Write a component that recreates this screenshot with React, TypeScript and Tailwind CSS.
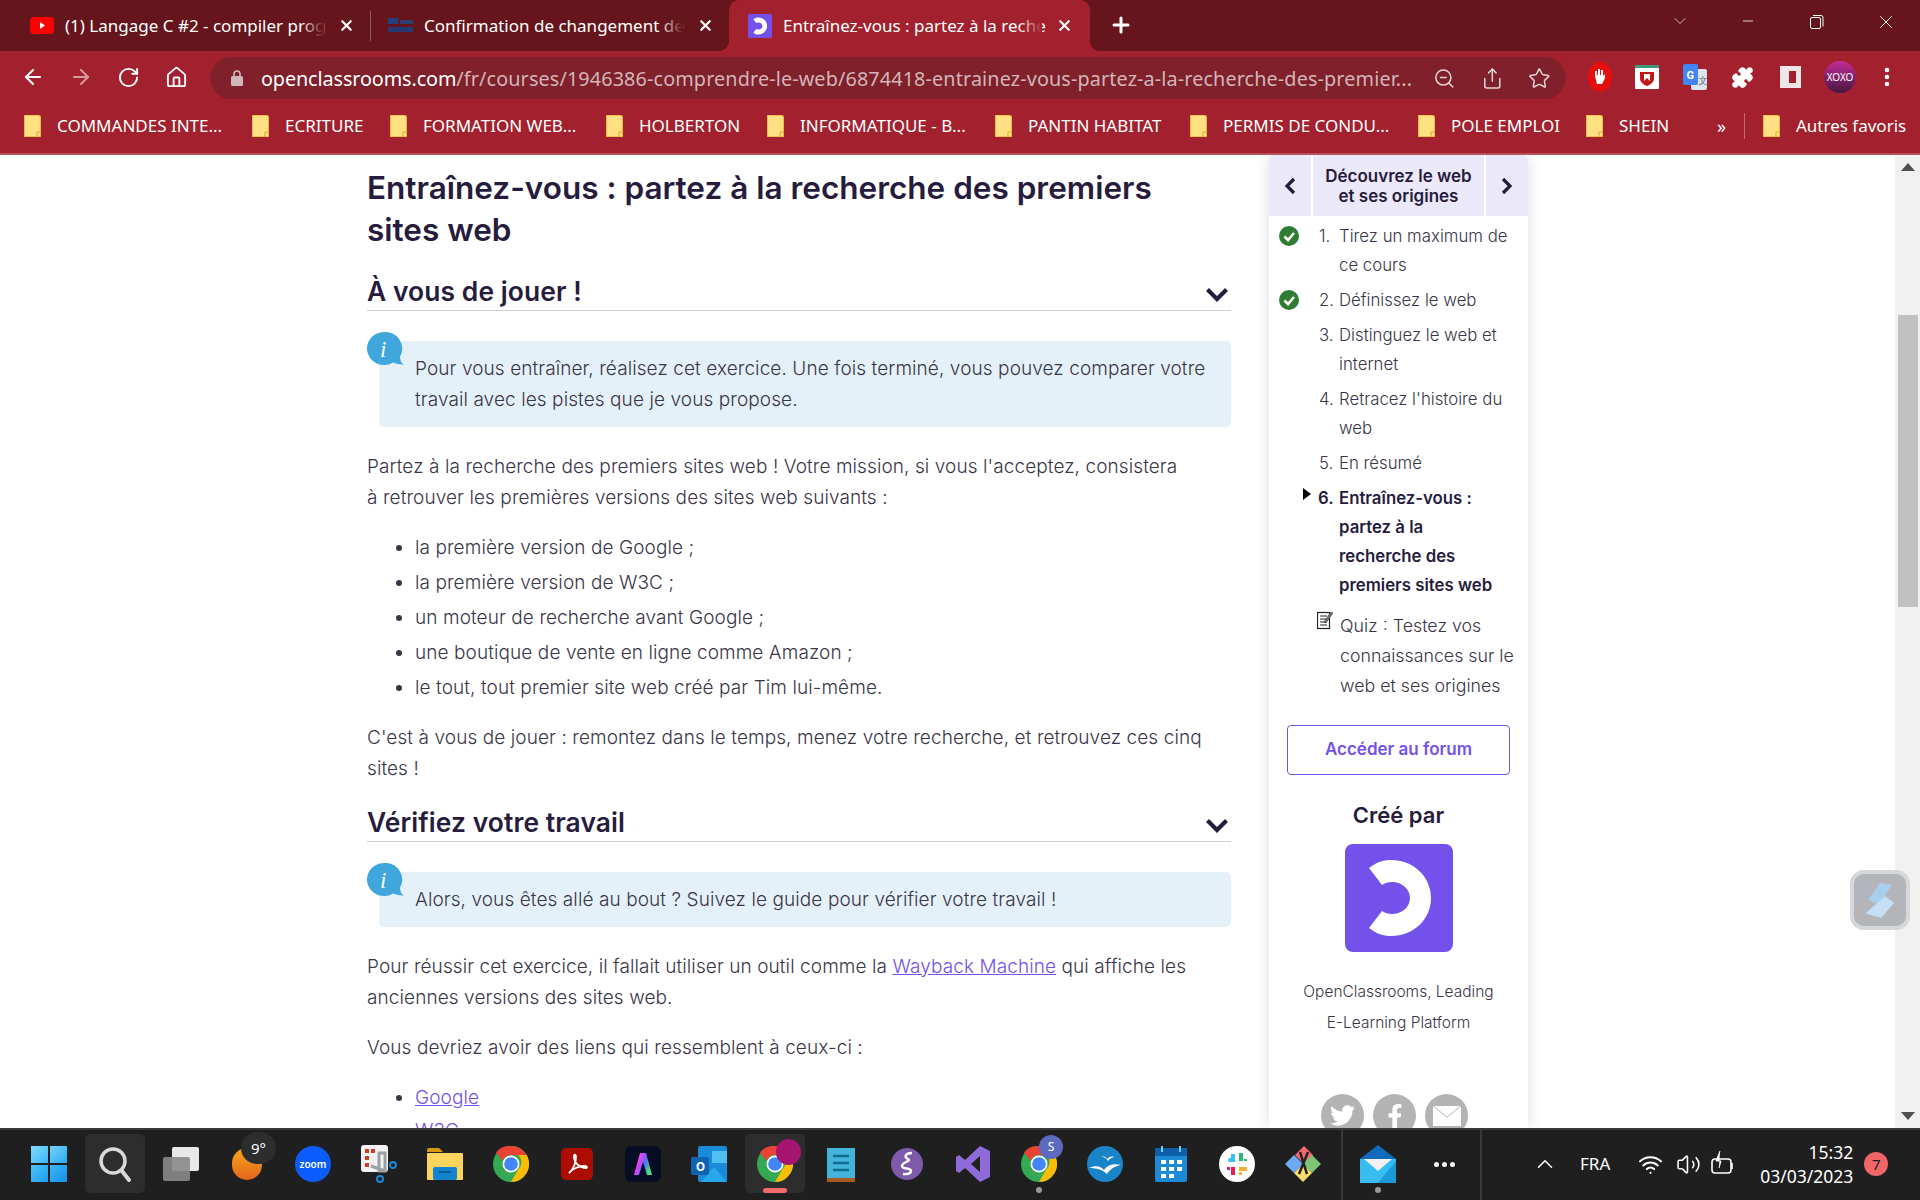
import {
  ArrowLeft,
  ArrowRight,
  ChevronDown,
  ChevronUp,
  Home,
  Minus,
  MoreVertical,
  Plus,
  Puzzle,
  RotateCw,
  Share,
  Star,
  Volume2,
  Wifi,
  X,
  ZoomOut,
} from "lucide-react";
import { FaFacebookF, FaTwitter } from "react-icons/fa";

const UI_FONT = "font-['Noto_Sans','Open_Sans',sans-serif]";

const BOOKMARKS = [
  { label: "COMMANDES INTE...", width: "w-[167px]" },
  { label: "ECRITURE", width: "w-[77px]" },
  { label: "FORMATION WEB...", width: "w-[155px]" },
  { label: "HOLBERTON", width: "w-[100px]" },
  { label: "INFORMATIQUE - B...", width: "w-[167px]" },
  { label: "PANTIN HABITAT", width: "w-[134px]" },
  { label: "PERMIS DE CONDU...", width: "w-[167px]" },
  { label: "POLE EMPLOI", width: "w-[107px]" },
  { label: "SHEIN", width: "w-[50px]" },
];

function Folder() {
  return (
    <svg width="17" height="22" viewBox="0 0 17 22" className="shrink-0">
      <path d="M0 0h15l2 2v20H0z" fill="#ffe082" />
      <path d="M0 0h15l2 2v20H0z" fill="none" stroke="#e0a526" strokeWidth="1.2" />
      <path d="M13 22v-5h4" fill="none" stroke="#e0a526" strokeWidth="1" />
    </svg>
  );
}

function OcMark({ size, bg = "#7451eb" }: { size: number; bg?: string }) {
  return (
    <svg width={size} height={size} viewBox="0 0 108 108">
      <rect width="108" height="108" rx="8" fill={bg} />
      <path
        d="M24 24c8-6 14-8 22-8 23 0 40 17 40 38S69 92 46 92c-8 0-14-2-22-8l13-17c3 2 6 3 10 3 10 0 18-7 18-16s-8-16-18-16c-4 0-7 1-10 3z"
        fill="#fff"
      />
    </svg>
  );
}

function Tab({
  title,
  icon,
  active,
  fade,
  box,
}: {
  title: string;
  icon: React.ReactNode;
  active?: boolean;
  fade: string;
  box: string;
}) {
  return (
    <div className={`flex h-[51px] items-center relative shrink-0 ${box}`}>
      {active && (
        <>
          <div className="absolute -left-[10px] bottom-0 w-[10px] h-[10px] bg-[radial-gradient(circle_at_0_0,transparent_10px,#a3212e_10px)]" />
          <div className="absolute -right-[10px] bottom-0 w-[10px] h-[10px] bg-[radial-gradient(circle_at_100%_0,transparent_10px,#a3212e_10px)]" />
        </>
      )}
      <div className="flex justify-center shrink-0">{icon}</div>
      <div className="ml-[11px] w-[259px] whitespace-nowrap text-[17px] text-white relative">
        {title}
        <div className={`absolute inset-y-0 right-0 w-[24px] bg-gradient-to-r from-transparent ${fade}`} />
      </div>
      <X size={17} strokeWidth={3} className="text-white ml-[14px] shrink-0" />
    </div>
  );
}

function BrowserChrome() {
  return (
    <div className={`${UI_FONT} shrink-0`}>
      {/* tab strip */}
      <div className="h-[51px] bg-[#66151c] flex items-start relative">
        <Tab
          title="(1) Langage C #2 - compiler prog"
          fade="to-[#66151c]"
          box="w-[371px] pl-[30px]"
          icon={
            <svg width="24" height="17" viewBox="0 0 24 17">
              <rect width="24" height="17" rx="4" fill="#f00" />
              <path d="M10 5l5 3.5-5 3.5z" fill="#fff" />
            </svg>
          }
        />
        <div className="w-[1px] h-[30px] bg-[#8f5a5f] mt-[11px] -ml-[1px] shrink-0" />
        <Tab
          title="Confirmation de changement de"
          fade="to-[#66151c]"
          box="w-[358px] pl-[17px]"
          icon={
            <svg width="25" height="15" viewBox="0 0 25 15">
              <rect width="10" height="6" fill="#23407e" />
              <rect x="12" y="2" width="13" height="4" fill="#2d3f72" />
              <rect y="9" width="25" height="5" fill="#253a70" />
            </svg>
          }
        />
        <Tab
          title="Entraînez-vous : partez à la reche"
          fade="to-[#a3212e]"
          active
          box="w-[361px] pl-[19px] bg-[#a3212e] rounded-t-[10px]"
          icon={<OcMark size={24} />}
        />
        <Plus size={24} strokeWidth={3} className="text-white ml-[19px] mt-[13px]" />
        <div className="flex-1" />
        <ChevronDown size={20} strokeWidth={1} className="text-[#e8d5d7] mt-[11px] mr-[50px]" />
        <Minus size={16} strokeWidth={1.2} className="text-white mt-[13px] mr-[53px]" />
        <svg width="16" height="16" viewBox="0 0 16 16" className="mt-[14px] mr-[50px]" fill="none" stroke="#fff">
          <rect x="1.5" y="3.5" width="10" height="11" rx="1.5" />
          <path d="M4 1.5h8a2 2 0 0 1 2 2v9" />
        </svg>
        <X size={22} strokeWidth={1} className="text-white mt-[11px] mr-[23px]" />
      </div>

      {/* toolbar */}
      <div className="h-[52px] bg-[#a3212e] flex items-center relative">
        <div className="flex items-center pl-[21px] gap-[24px] w-[210px]">
          <ArrowLeft size={24} strokeWidth={2} className="text-white" />
          <ArrowRight size={24} strokeWidth={2} className="text-[#d99aa0]" />
          <RotateCw size={23} strokeWidth={2} className="text-white" />
          <Home size={23} strokeWidth={2} className="text-white ml-[1px]" />
        </div>
        <div className="w-[1356px] h-[42px] mt-[2px] rounded-full bg-[#7f202a] flex items-center pl-[20px] pr-[15px]">
          <svg width="14" height="16" viewBox="0 0 14 16" className="shrink-0">
            <rect x="1" y="6" width="12" height="10" rx="1.5" fill="#cfb7ba" />
            <path d="M4 6V4a3 3 0 0 1 6 0v2" fill="none" stroke="#cfb7ba" strokeWidth="1.6" />
          </svg>
          <div className="ml-[17px] w-[1156px] pt-[1px] whitespace-nowrap text-[19.8px] tracking-[0.13px] text-[#d3b5b9]">
            <span className="text-white tracking-[-0.1px]">openclassrooms.com</span>
            /fr/courses/1946386-comprendre-le-web/6874418-entrainez-vous-partez-a-la-recherche-des-premier...
          </div>
          <ZoomOut size={23} strokeWidth={1.6} className="text-[#e5d3d5] ml-[21px]" />
          <Share size={23} strokeWidth={1.6} className="text-[#e5d3d5] ml-[25px]" />
          <Star size={23} strokeWidth={1.6} className="text-[#e5d3d5] ml-[25px]" />
        </div>
        <div className="flex items-center ml-[22px] gap-[11px]">
          {/* blocker */}
          <svg width="24" height="30" viewBox="0 0 24 30">
            <ellipse cx="12" cy="15" rx="12" ry="15" fill="#e80d0d" />
            <path d="M7 14V9h2v4h1V7h2v6h1V8h2v6l2-2v4l-3 6H9z" fill="#fff" />
          </svg>
          <div className="w-[25px]" />
          <svg width="24" height="24" viewBox="0 0 24 24" className="-ml-[24px]">
            <rect width="24" height="24" rx="1" fill="#fff" />
            <rect width="24" height="3" fill="#3c9b76" />
            <path d="M5 7h14v7c0 3-4 6-7 7-3-1-7-4-7-7z" fill="#c01818" />
            <path d="M9 9v7l3-3 3 3V9z" fill="#fff" />
          </svg>
          <svg width="24" height="26" viewBox="0 0 24 26" className="ml-[13px]">
            <rect x="8" y="5" width="16" height="21" rx="2" fill="#dfe3ea" />
            <rect width="15" height="21" rx="2" fill="#4285f4" />
            <text x="3.5" y="15" fontSize="11" fontWeight="700" fill="#fff" fontFamily="Roboto">G</text>
            <text x="15" y="20" fontSize="10" fill="#5f6c80" fontFamily="Roboto">文</text>
          </svg>
          <Puzzle size={23} fill="#fff" strokeWidth={1.5} className="text-white ml-[13px]" />
          <div className="w-[21px] h-[22px] border-[5px] border-l-[9px] border-[#f0e6e7] ml-[15px]" />
          <div className="w-[32px] h-[32px] ml-[12px] rounded-full bg-gradient-to-b from-[#c62a9a] to-[#4a1540] flex items-center justify-center text-[10px] text-white">
            XOXO
          </div>
          <MoreVertical size={24} strokeWidth={2.6} className="text-white ml-[8px]" />
        </div>
      </div>

      {/* bookmarks */}
      <div className="h-[52px] bg-[#a3212e] border-b-2 border-[#bb505b] flex items-center text-[17px] text-white pl-[24px] pb-[4px]">
        {BOOKMARKS.map((b) => (
          <div key={b.label} className="flex items-center mr-[28px]">
            <Folder />
            <span className={`ml-[16px] whitespace-nowrap ${b.width}`}>{b.label}</span>
          </div>
        ))}
        <span className="ml-[20px] text-[18px] w-[27px]">»</span>
        <div className="w-[1px] h-[26px] bg-[#c46a73]" />
        <div className="flex items-center ml-[18px]">
          <Folder />
          <span className="ml-[16px] whitespace-nowrap">Autres favoris</span>
        </div>
      </div>
    </div>
  );
}

function Chevron() {
  return (
    <svg width="24" height="15" viewBox="0 0 24 15" className="mb-[-6px] mr-[2px]">
      <path d="M2.500 2.500 12 12l9.500-9.500" fill="none" stroke="#271c3d" strokeWidth="4.200" />
    </svg>
  );
}

function Callout({ children }: { children: React.ReactNode }) {
  return (
    <div className="relative ml-[12px] mt-[30px] rounded-[5px] bg-[#e5f1f8] pl-[36px] pr-[20px] py-[12px]">
      <svg width="37" height="34" viewBox="0 0 37 34" className="absolute -left-[12px] -top-[9px]">
        <path d="M17 0a17 16.500 0 1 0 9 30.500q6 2.500 11 2q-4-2-4-8A17 16.500 0 0 0 17 0z" fill="#3fa7dc" />
        <text x="13" y="25" fontSize="23" fontStyle="italic" fill="#fff" fontFamily="Liberation Serif">i</text>
      </svg>
      {children}
    </div>
  );
}

function SectionHeading({ title, className }: { title: string; className: string }) {
  return (
    <div className={`flex items-center justify-between border-b border-[#cfcfcf] pb-[1px] ${className}`}>
      <h2 className="text-[26.400px] leading-[36px] font-semibold text-[#271c3d]">{title}</h2>
      <Chevron />
    </div>
  );
}

function Article() {
  return (
    <article className="w-[864px] ml-[367px] pt-[12px] shrink-0 text-[19px] tracking-[0.09px] leading-[31px] font-light text-[#3a3548]">
      <h1 className="text-[31.500px] leading-[42px] font-semibold tracking-normal text-[#271c3d]">
        Entraînez-vous : partez à la recherche des premiers sites web
      </h1>
      <SectionHeading title="À vous de jouer !" className="mt-[22px]" />
      <Callout>
        Pour vous entraîner, réalisez cet exercice. Une fois terminé, vous pouvez comparer votre
        <br />
        travail avec les pistes que je vous propose.
      </Callout>
      <p className="mt-[24px]">
        Partez à la recherche des premiers sites web ! Votre mission, si vous l'acceptez, consistera
        <br />à retrouver les premières versions des sites web suivants :
      </p>
      <ul className="mt-[19px] ml-[48px] list-disc flex flex-col gap-[4px]">
        <li>la première version de Google ;</li>
        <li>la première version de W3C ;</li>
        <li>un moteur de recherche avant Google ;</li>
        <li>une boutique de vente en ligne comme Amazon ;</li>
        <li>le tout, tout premier site web créé par Tim lui-même.</li>
      </ul>
      <p className="mt-[19px]">
        C'est à vous de jouer : remontez dans le temps, menez votre recherche, et retrouvez ces cinq
        <br />
        sites !
      </p>
      <SectionHeading title="Vérifiez votre travail" className="mt-[20px]" />
      <Callout>Alors, vous êtes allé au bout ? Suivez le guide pour vérifier votre travail !</Callout>
      <p className="mt-[24px]">
        Pour réussir cet exercice, il fallait utiliser un outil comme la{" "}
        <a className="text-[#7451eb] underline">Wayback Machine</a> qui affiche les
        <br />
        anciennes versions des sites web.
      </p>
      <p className="mt-[19px]">Vous devriez avoir des liens qui ressemblent à ceux-ci :</p>
      <ul className="mt-[19px] ml-[48px] list-disc flex flex-col gap-[2px]">
        <li>
          <a className="text-[#7451eb] underline">Google</a>
        </li>
        <li>
          <a className="text-[#7451eb] underline">W3C</a>
        </li>
      </ul>
    </article>
  );
}

function Check() {
  return (
    <svg width="20" height="20" viewBox="0 0 20 20" className="absolute left-[10px] top-[4px]">
      <circle cx="10" cy="10" r="10" fill="#2e7d32" />
      <path d="M5.500 10.500 9 14l6-7" fill="none" stroke="#fff" strokeWidth="2.600" />
    </svg>
  );
}

const STEPS = [
  { n: "1.", text: "Tirez un maximum de ce cours", done: true },
  { n: "2.", text: "Définissez le web", done: true },
  { n: "3.", text: "Distinguez le web et internet" },
  { n: "4.", text: "Retracez l'histoire du web" },
  { n: "5.", text: "En résumé" },
];

function Sidebar() {
  return (
    <aside className="w-[259px] ml-[38px] shrink-0 bg-white rounded-t-[5px] shadow-[0_0_16px_rgba(0,0,0,0.13)] font-light text-[#3a3548]">
      <div className="flex h-[61px] gap-[2px] font-semibold text-[#271c3d]">
        <div className="w-[42px] bg-[#ebe8f9] rounded-tl-[5px] flex items-center justify-center">
          <svg width="14" height="18" viewBox="0 0 14 18">
            <path d="M11 2 4 9l7 7" fill="none" stroke="#271c3d" strokeWidth="3.200" />
          </svg>
        </div>
        <div className="flex-1 bg-[#ebe8f9] text-center text-[17px] leading-[20px] flex items-center justify-center">
          Découvrez le web
          <br />
          et ses origines
        </div>
        <div className="w-[42px] bg-[#ebe8f9] rounded-tr-[5px] flex items-center justify-center">
          <svg width="14" height="18" viewBox="0 0 14 18">
            <path d="m3 2 7 7-7 7" fill="none" stroke="#271c3d" strokeWidth="3.200" />
          </svg>
        </div>
      </div>
      <ol className="pt-[6px] text-[16.800px] leading-[29px]">
        {STEPS.map((s) => (
          <li key={s.n} className="relative pl-[70px] pr-[10px] pb-[6px]">
            {s.done && <Check />}
            <span className="absolute left-[50px]">{s.n}</span>
            {s.text}
          </li>
        ))}
        <li className="relative pl-[70px] pr-[10px] font-semibold text-[#271c3d] pb-[6px]">
          <svg width="10" height="12" viewBox="0 0 10 12" className="absolute left-[33px] top-[4px]">
            <path d="M1 0l8 6-8 6z" fill="#000" />
          </svg>
          <span className="absolute left-[49px]">6.</span>
          Entraînez-vous :
          <br />
          partez à la
          <br />
          recherche des
          <br />
          premiers sites web
        </li>
      </ol>
      <div className="relative pl-[71px] pr-[8px] text-[17.800px] leading-[30px] pt-[5px]">
        <svg width="16" height="20" viewBox="0 0 16 20" className="absolute left-[48px] top-[4px]" fill="none" stroke="#222">
          <rect x="0.500" y="2.500" width="12" height="16" fill="#fff" strokeWidth="1.200" />
          <path d="M3 6h7M3 9h7M3 12h7M3 15h7" strokeWidth="1" />
          <path d="M7 12 14 2l2 1-7 10z" fill="#777" strokeWidth="0.500" />
        </svg>
        Quiz : Testez vos connaissances sur le web et ses origines
      </div>
      <button className="block mt-[24px] ml-[18px] w-[223px] h-[50px] rounded-[4px] border border-[#7451eb] text-[17px] font-semibold text-[#7451eb]">
        Accéder au forum
      </button>
      <h3 className="mt-[24px] text-center text-[22px] leading-[32px] font-semibold text-[#271c3d]">Créé par</h3>
      <div className="mt-[13px] flex justify-center">
        <OcMark size={108} />
      </div>
      <p className="mt-[24px] text-center text-[15.500px] leading-[31px]">
        OpenClassrooms, Leading
        <br />
        E-Learning Platform
      </p>
      <div className="mt-[56px] flex justify-center gap-[9px] pr-[8px]">
        <div className="w-[43px] h-[43px] rounded-full bg-[#b3b3b3] flex items-center justify-center text-white">
          <FaTwitter size={25} />
        </div>
        <div className="w-[43px] h-[43px] rounded-full bg-[#b3b3b3] flex items-center justify-center text-white">
          <FaFacebookF size={24} />
        </div>
        <div className="w-[43px] h-[43px] rounded-full bg-[#b3b3b3] flex items-center justify-center">
          <svg width="28" height="20" viewBox="0 0 28 20" fill="#fff">
            <rect width="28" height="20" />
            <path d="M0 0l14 11L28 0" fill="none" stroke="#b3b3b3" />
          </svg>
        </div>
      </div>
    </aside>
  );
}

function Scrollbar() {
  return (
    <div className="w-[25px] bg-[#f1f1f1] shrink-0 flex flex-col items-center relative">
      <svg width="14" height="8" viewBox="0 0 14 8" className="mt-[8px]">
        <path d="M7 0l7 8H0z" fill="#505050" />
      </svg>
      <div className="w-[20px] h-[292px] bg-[#c1c1c1] mt-[144px]" />
      <div className="flex-1" />
      <svg width="14" height="8" viewBox="0 0 14 8" className="mb-[8px]">
        <path d="M7 8l7-8H0z" fill="#505050" />
      </svg>
    </div>
  );
}

function Slot({
  children,
  dot,
  active,
  bar,
}: {
  children: React.ReactNode;
  dot?: boolean;
  active?: boolean;
  bar?: boolean;
}) {
  return (
    <div className="w-[66px] h-[68px] flex items-center justify-center relative shrink-0">
      {active && <div className="absolute left-[3px] right-[3px] top-[4px] bottom-[5px] rounded-[5px] bg-[#2d2d2d]" />}
      <div className="relative flex items-center justify-center">{children}</div>
      {dot && <div className="absolute bottom-[5px] w-[6px] h-[6px] rounded-full bg-[#9a9a9a]" />}
      {bar && <div className="absolute bottom-[5px] w-[24px] h-[5px] rounded-full bg-[#f06b6b]" />}
    </div>
  );
}

function ChromeIcon({ size = 36 }: { size?: number }) {
  return (
    <svg width={size} height={size} viewBox="0 0 36 36">
      <circle cx="18" cy="18" r="18" fill="#34a853" />
      <path d="M18 0a18 18 0 0 1 15.600 9H18a9 9 0 0 0-8.400 5.700L3 6.500A18 18 0 0 1 18 0z" fill="#ea4335" />
      <path d="M33.600 9A18 18 0 0 1 18 36l7.800-13.500A9 9 0 0 0 25 9z" fill="#fbbc04" />
      <circle cx="18" cy="18" r="8.500" fill="#fff" />
      <circle cx="18" cy="18" r="6.800" fill="#4285f4" />
    </svg>
  );
}

function Taskbar() {
  return (
    <div className={`${UI_FONT} h-[72px] shrink-0 bg-[#1f1f1f] border-t-[2px] border-[#3a3a3a] flex items-start pl-[16px] text-white relative`}>
      <Slot>
        <div className="grid grid-cols-2 gap-[2px] w-[36px] h-[36px]">
          <div className="bg-gradient-to-br from-[#7fdcfb] to-[#38b7f5]" />
          <div className="bg-gradient-to-br from-[#6fd3fa] to-[#25a9f2]" />
          <div className="bg-gradient-to-br from-[#4cc2f7] to-[#1b9ff0]" />
          <div className="bg-gradient-to-br from-[#3cb6f6] to-[#1290ea]" />
        </div>
      </Slot>
      <Slot active>
        <svg width="34" height="36" viewBox="0 0 34 36" fill="none" stroke="#d9d9d9">
          <circle cx="15" cy="15" r="12" strokeWidth="3.500" />
          <path d="m24 25 7 9" strokeWidth="4" strokeLinecap="round" />
        </svg>
      </Slot>
      <Slot>
        <div className="relative w-[36px] h-[34px]">
          <div className="absolute right-0 top-0 w-[27px] h-[24px] bg-[#e8e8e8] rounded-[2px]" />
          <div className="absolute left-0 bottom-0 w-[27px] h-[24px] bg-[#8a8a8a]/90 rounded-[2px]" />
        </div>
      </Slot>
      <Slot>
        <div className="w-[30px] h-[32px] rounded-full bg-gradient-to-b from-[#f8a61d] to-[#e2641a]" />
        <div className="absolute -right-[14px] -top-[16px] w-[35px] h-[32px] rounded-full bg-[#2d2d2d] flex items-center justify-center text-[15px]">
          9°
        </div>
      </Slot>
      <Slot>
        <div className="w-[36px] h-[36px] rounded-full bg-[#0b5cff] flex items-center justify-center text-[10px] font-semibold">
          zoom
        </div>
      </Slot>
      <Slot>
        <svg width="36" height="38" viewBox="0 0 36 38">
          <rect width="27" height="27" rx="3" fill="#f2f2f2" />
          <path d="M4 4h4v4H4zM10 4h4v4h-4zM4 11h4v4H4zM4 18h4v4H4z" fill="#d13b20" />
          <path d="M18 8h6v18h-6zM10 21l14 5" stroke="#9aa0a6" strokeWidth="3" fill="none" />
          <circle cx="32" cy="20" r="3" fill="none" stroke="#1787d4" strokeWidth="2" />
          <circle cx="19" cy="34" r="3" fill="none" stroke="#1787d4" strokeWidth="2" />
        </svg>
      </Slot>
      <Slot>
        <svg width="36" height="32" viewBox="0 0 36 32">
          <path d="M0 2a2 2 0 0 1 2-2h10l4 4H0z" fill="#d99a11" />
          <rect y="5" width="36" height="27" rx="1" fill="#ffd45c" />
          <rect x="6" y="19" width="24" height="13" rx="2" fill="#1584d0" />
          <rect x="12" y="23" width="12" height="2" fill="#0d5c95" />
        </svg>
      </Slot>
      <Slot>
        <ChromeIcon />
      </Slot>
      <Slot>
        <div className="w-[32px] h-[32px] rounded-[5px] bg-[#ad0c00] flex items-center justify-center">
          <svg width="24" height="24" viewBox="0 0 24 24" fill="none" stroke="#fff" strokeWidth="1.800">
            <path d="M4 21c4-3 7-10 7-16 0-3-2-3-2 0 0 6 6 11 12 11 2 0 1-2-2-2-5 0-12 3-15 7z" />
          </svg>
        </div>
      </Slot>
      <Slot>
        <div className="w-[36px] h-[36px] rounded-[6px] bg-[#070d24] flex items-center justify-center">
          <svg width="18" height="24" viewBox="0 0 18 24">
            <defs>
              <linearGradient id="adobeA" x1="0" y1="0" x2="1" y2="0.400">
                <stop offset="0" stopColor="#ff6a3d" />
                <stop offset="0.400" stopColor="#e040fb" />
                <stop offset="0.700" stopColor="#4f6cff" />
                <stop offset="1" stopColor="#4ade80" />
              </linearGradient>
            </defs>
            <path d="M6 1h6l6 22h-5L9 10 5 23H0z" fill="url(#adobeA)" />
          </svg>
        </div>
      </Slot>
      <Slot>
        <svg width="36" height="36" viewBox="0 0 36 36">
          <rect x="7" y="0" width="29" height="36" rx="2" fill="#1a8bd8" />
          <rect x="21" y="5" width="15" height="12" fill="#50c0f0" />
          <path d="M10 36l13-15 13 15z" fill="#28a8ea" />
          <rect y="11" width="18" height="18" rx="2" fill="#0f62b0" />
          <text x="5" y="25" fontSize="13" fontWeight="700" fill="#fff" fontFamily="Roboto">O</text>
        </svg>
      </Slot>
      <Slot active bar>
        <ChromeIcon />
        <div className="absolute -right-[8px] -top-[7px] w-[25px] h-[26px] rounded-full bg-[#a5156f]" />
      </Slot>
      <Slot>
        <svg width="28" height="36" viewBox="0 0 28 36">
          <rect y="2" width="28" height="30" fill="#45b4da" />
          <rect y="32" width="28" height="4" fill="#a85b1e" />
          <path d="M6 10h16M6 17h16M6 24h16" stroke="#0f6d8f" strokeWidth="2.500" />
        </svg>
      </Slot>
      <Slot>
        <div className="w-[32px] h-[32px] rounded-full bg-[#7f5aab] flex items-center justify-center">
          <svg width="16" height="26" viewBox="0 0 16 26" fill="none" stroke="#fff" strokeWidth="2.400">
            <path d="M13 2C6 2 5 6 9 8c4 2-6 3-6 7s9 1 9 5-8 3-8 3" />
          </svg>
        </div>
      </Slot>
      <Slot>
        <svg width="34" height="36" viewBox="0 0 34 36">
          <path d="M24 0l10 5v26l-10 5L9 22l-6 5-3-2V11l3-2 6 5z" fill="#8e6bd8" />
          <path d="M24 10v16l-9-8z" fill="#1f1f1f" />
        </svg>
      </Slot>
      <Slot dot>
        <ChromeIcon />
        <div className="absolute -right-[6px] -top-[11px] w-[24px] h-[24px] rounded-full bg-[#5c6bc0] flex items-center justify-center text-[12px]">
          S
        </div>
      </Slot>
      <Slot>
        <svg width="36" height="36" viewBox="0 0 36 36">
          <circle cx="18" cy="18" r="18" fill="#1a84c9" />
          <path d="M2 22c6-3 12-2 15 2 3-5 10-7 17-5-6 1-11 4-14 9-4-4-10-6-18-6zM14 10c3 0 5 1 6 3 2-2 4-3 7-2-3 1-5 2-6 4-2-3-4-4-7-5z" fill="#fff" />
        </svg>
      </Slot>
      <Slot>
        <svg width="32" height="36" viewBox="0 0 32 36">
          <rect y="2" width="32" height="34" rx="2" fill="#1d8ad6" />
          <rect y="2" width="32" height="8" fill="#0f5fa8" />
          <path d="M6 14h5v4H6zM14 14h5v4h-5zM22 14h5v4h-5zM6 21h5v4H6zM14 21h5v4h-5zM22 21h5v4h-5zM6 28h5v4H6zM14 28h5v4h-5z" fill="#fff" />
          <path d="M7 0v6M25 0v6" stroke="#6fd0f5" strokeWidth="2" />
        </svg>
      </Slot>
      <Slot>
        <svg width="36" height="36" viewBox="0 0 36 36">
          <circle cx="18" cy="18" r="18" fill="#fff" />
          <path d="M16 7v8h-5a2 2 0 0 1 0-4h1V7z" fill="#36c5f0" transform="translate(0 1)" />
          <path d="M20 7h4v8h-4zM25 15v-2h3v2z" fill="#2eb67d" />
          <path d="M20 21h8v4h-8zM20 26h3v3h-3z" fill="#ecb22e" />
          <path d="M12 21h4v8h-4zM8 21h3v3H8z" fill="#e01e5a" />
        </svg>
      </Slot>
      <Slot>
        <svg width="36" height="36" viewBox="0 0 36 36">
          <path d="M19 0l9 9-9 9-9-9z" fill="#f16b6b" />
          <path d="M9 9l9 9-9 9-9-9z" fill="#6fa8f5" />
          <path d="M27 9l9 9-9 9-9-9z" fill="#7cc576" />
          <path d="M18 18l9 9-9 9-9-9z" fill="#f7dc6f" />
          <path d="M15 6l7 22M23 6l-9 22" stroke="#222" strokeWidth="2.500" />
        </svg>
      </Slot>
      {/* pinned separator and running apps */}
      <div className="w-[2px] h-[70px] bg-[#3a3a3a] ml-[5px] mr-[2px] shrink-0" />
      <Slot dot>
        <svg width="36" height="38" viewBox="0 0 36 38">
          <path d="M18 0l18 14v24H0V14z" fill="#0f6cbd" />
          <rect y="14" width="36" height="24" fill="#38bdf2" />
          <path d="M36 16v22H18z" fill="#1a9ad6" />
          <path d="M4 14h28L18 26z" fill="#f2f2f2" />
        </svg>
      </Slot>
      <Slot>
        <div className="flex gap-[3px]">
          <div className="w-[5px] h-[5px] rounded-full bg-white" />
          <div className="w-[5px] h-[5px] rounded-full bg-white" />
          <div className="w-[5px] h-[5px] rounded-full bg-white" />
        </div>
      </Slot>
      <div className="w-[2px] h-[70px] bg-[#3a3a3a] ml-[3px] shrink-0" />

      {/* system tray */}
      <div className="flex items-center h-[68px] flex-1 text-[17px]">
        <ChevronUp size={26} strokeWidth={1.4} className="ml-[50px]" />
        <span className="ml-[22px]">FRA</span>
        <Wifi size={25} strokeWidth={2} className="ml-[28px]" />
        <Volume2 size={25} strokeWidth={1.5} className="ml-[13px]" />
        <svg width="24" height="28" viewBox="0 0 24 28" fill="none" stroke="#fff" strokeWidth="1.600" className="ml-[10px]">
          <rect x="1" y="9" width="19" height="14" rx="3" />
          <path d="M21 13v6" />
          <path d="M9 1 5 11h5l-2 7" fill="#fff" strokeWidth="1" />
        </svg>
        <div className="ml-[28px] w-[90px] shrink-0 whitespace-nowrap text-right leading-[24px] text-[17.500px] flex flex-col items-end">
          <span>15:32</span>
          <span>03/03/2023</span>
        </div>
        <div className="ml-[11px] w-[24px] h-[24px] rounded-full bg-[#f06565] flex items-center justify-center text-[15px] text-[#222]">
          7
        </div>
      </div>
    </div>
  );
}

export default function App() {
  return (
    <div className="h-[1200px] w-[1920px] flex flex-col overflow-hidden bg-white font-['Inter',sans-serif] relative">
      <BrowserChrome />
      <main className="flex-1 min-h-0 flex overflow-hidden relative">
        <Article />
        <Sidebar />
        <div className="flex-1" />
        <Scrollbar />
        {/* floating extension button */}
        <div className="absolute left-[1850px] top-[715px] w-[60px] h-[60px] rounded-[14px] border-[4px] border-[#d6d7db] bg-[#b4b5ba] flex items-center justify-center">
          <svg width="28" height="40" viewBox="0 0 28 40" strokeLinejoin="round">
            <path d="M14 3l12 2-13 19-11-4z" fill="#a9cfee" />
            <path d="M19 17l8 6-12 14-14-4z" fill="#c5dff5" stroke="#c5dff5" strokeWidth="1.500" />
          </svg>
        </div>
      </main>
      <Taskbar />
    </div>
  );
}
